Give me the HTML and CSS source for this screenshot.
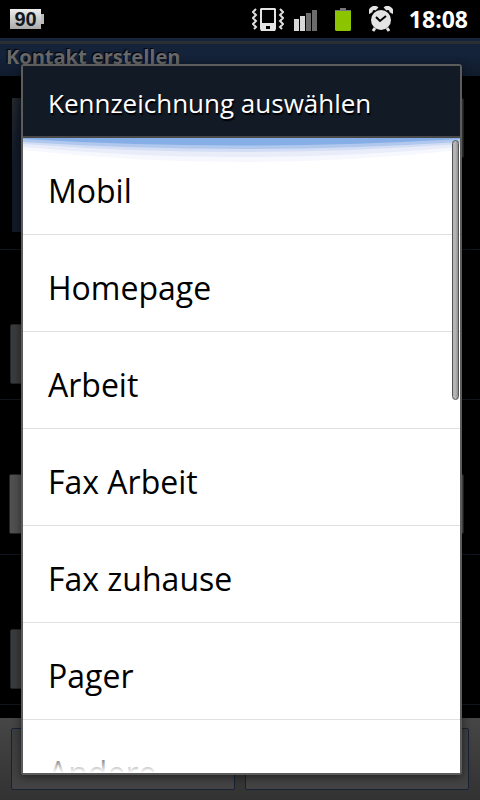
FILE: index.html
```html
<!DOCTYPE html>
<html lang="de">
<head>
    <meta charset="utf-8">
    <title>Kontakt erstellen</title>
    <meta name="viewport" content="width=device-width, initial-scale=1">
    <link rel="stylesheet" href="styles.css">
</head>
<body>

<div class="screen">
    <header class="status-bar">
        <div class="battery-level">90</div>
        <div class="status-icons">
            <svg class="icon-vibrate" width="32" height="26" viewBox="0 0 32 26">
                <path d="M4 3L1 6l3 3-3 3 3 3-3 3 3 3-2 2M28 3l3 3-3 3 3 3-3 3 3 3-3 3 2 2" fill="none" stroke="#ddd" stroke-width="2"/>
                <path d="M9 2h14l1 1v20l-1 2H9l-1-2V3zM10 4v13h12V4zM14 20v3h4v-3z" fill="#e4e4e4" fill-rule="evenodd"/>
            </svg>
            <svg class="icon-signal" width="24" height="26" viewBox="0 0 24 26">
                <path d="M0 13h5v12H0zM6 10h5v15H6z" fill="#d8d8d8"/>
                <path d="M12 7h5v18h-5zM18 4h5v21h-5z" fill="#6c6c6c"/>
            </svg>
            <svg class="icon-battery" width="18" height="26" viewBox="0 0 18 26">
                <path d="M6 2h6v2h5v3H1V4h5z" fill="#777"/>
                <path d="M1 5h16v19l-1 1H2l-1-1z" fill="#8cc400"/>
            </svg>
            <svg class="icon-alarm" width="24" height="26" viewBox="0 0 24 26">
                <path d="M2 7C0 4 5 0 8 3M22 7c2-3-3-7-6-4" fill="none" stroke="#e4e4e4" stroke-width="4"/>
                <path d="M6 22l-2 3M18 22l2 3" stroke="#e4e4e4" stroke-width="3"/>
                <circle cx="12" cy="14" r="10" fill="#e4e4e4"/>
                <path d="M7 11l4 4 6-5" fill="none" stroke="#000" stroke-width="2"/>
            </svg>
            <time class="clock">18:08</time>
        </div>
    </header>

    <main class="contact">
        <h1 class="contact-title">Kontakt erstellen</h1>
        <div class="contact-row row-photo">
            <div class="photo"></div>
            <div class="field"></div>
        </div>
        <div class="contact-row"><div class="field"></div></div>
        <div class="contact-row row-wide"><div class="field light"></div></div>
        <div class="contact-row"><div class="field"></div></div>
        <div class="contact-footer">
            <div class="footer-btn"></div>
            <div class="footer-btn"></div>
        </div>
    </main>

    <section class="dialog" role="dialog" aria-labelledby="dialog-title">
        <h2 class="dialog-title" id="dialog-title">Kennzeichnung auswählen</h2>
        <div class="dialog-body">
            <svg class="glow" viewBox="0 0 438 26" preserveAspectRatio="none">
                <path d="M0 0h438v12Q219 36 0 12z" fill="#f7f8fe"/>
                <path d="M0 0h438v9Q219 29 0 9z" fill="#e9edfa"/>
                <path d="M0 0h438v6Q219 22 0 6z" fill="#d3def5"/>
                <path d="M0 0h438v4Q219 18 0 4z" fill="#b0c8ee"/>
                <path d="M0 0h438v1Q219 14 0 1z" fill="#86aee6"/>
            </svg>
            <ul class="label-list">
                <li><button type="button">Mobil</button></li>
                <li><button type="button">Homepage</button></li>
                <li><button type="button">Arbeit</button></li>
                <li><button type="button">Fax Arbeit</button></li>
                <li><button type="button">Fax zuhause</button></li>
                <li><button type="button">Pager</button></li>
                <li><button type="button">Andere</button></li>
            </ul>
            <div class="fade"></div>
            <div class="scrollbar"></div>
        </div>
    </section>
</div>

</body>
</html>
```

FILE: styles.css
```css
* {
    box-sizing: border-box;
}
body {
    margin: 0;
    background: #000;
    font-family: "Open Sans", "Noto Sans", sans-serif;
}
.screen {
    position: relative;
    display: flex;
    flex-direction: column;
    height: 100vh;
    overflow: hidden;
}

/* status bar */
.status-bar {
    display: flex;
    justify-content: space-between;
    align-items: center;
    height: 38px;
    padding: 0 12px 0 10px;
    color: #fff;
}
.battery-level {
    position: relative;
    width: 31px;
    height: 20px;
    background: linear-gradient(#eee, #aaa);
    color: #111820;
    font: bold 20px/21px "Liberation Sans", Arial, sans-serif;
    text-align: center;
}
.battery-level::after {
    content: "";
    position: absolute;
    left: 31px;
    top: 5px;
    width: 3px;
    height: 10px;
    background: #bbb;
}
.status-icons {
    display: flex;
    align-items: center;
}
.icon-signal {
    margin-left: 10px;
}
.icon-battery {
    margin-left: 16px;
}
.icon-alarm {
    margin-left: 17px;
}
.clock {
    margin-left: 16px;
    font-size: 23px;
    line-height: 38px;
    font-weight: bold;
}

/* dimmed contact form */
.contact {
    flex: 1;
    display: flex;
    flex-direction: column;
}
.contact-title {
    height: 38px;
    margin: 0;
    padding-left: 6px;
    border-top: 3px solid #15243a;
    background: linear-gradient(#2a2f33 3px, #14233a 3px, #14233a 14px, #101b2c);
    color: #686868;
    font-size: 20px;
    line-height: 32px;
    text-shadow: -1px -1px 1px #000;
}
.contact-row {
    display: flex;
    align-items: flex-end;
    height: 150px;
    padding: 0 20px 15px 10px;
    border-bottom: 1px solid #10151f;
}
.row-photo {
    align-items: flex-start;
    height: 174px;
    padding: 22px 16px 0 12px;
}
.row-wide {
    height: 155px;
    padding: 0 16px 20px 9px;
}
.photo {
    width: 110px;
    height: 134px;
    background: linear-gradient(100deg, #26292d, #121a28 12px);
}
.field {
    flex: 1;
    height: 60px;
    border: 1px solid #20262d;
    border-radius: 2px;
    background: #3b3b3b;
}
.light {
    background: #505050;
}
.contact-footer {
    flex: 1;
    display: flex;
    gap: 10px;
    margin-top: 13px;
    padding: 10px 11px;
    background: linear-gradient(#464646, #323232);
}
.footer-btn {
    flex: 1;
    border: 1px solid #172234;
    border-radius: 2px;
    background: linear-gradient(#3c3d3f, #434343);
}

/* dialog */
.dialog {
    position: absolute;
    top: 64px;
    right: 18px;
    bottom: 25px;
    left: 21px;
    display: flex;
    flex-direction: column;
    border: 2px solid #5c5c5c;
    border-radius: 3px;
    background: #fff;
    box-shadow: 0 2px 8px rgba(0,0,0,0.5);
}
.dialog-title {
    height: 72px;
    margin: 0;
    padding-left: 25px;
    border-bottom: 2px solid #484848;
    background: #121a26;
    color: #fff;
    font-size: 26px;
    font-weight: normal;
    line-height: 74px;
    text-shadow: 1px 2px 1px #000;
}
.dialog-body {
    position: relative;
    flex: 1;
    min-height: 0;
    overflow: hidden;
}
.glow {
    position: absolute;
    top: 0;
    left: 0;
    width: 100%;
    height: 26px;
}
.label-list {
    position: relative;
    margin: 0;
    padding: 0;
    list-style: none;
}
.label-list li {
    border-bottom: 1px solid #e0e0e0;
}
.label-list button {
    display: block;
    width: 100%;
    height: 96px;
    padding: 10px 25px 0;
    border: 0;
    background: none;
    color: #000;
    font: 32px/48px "Open Sans", "Noto Sans", sans-serif;
    text-align: left;
}
.fade {
    position: absolute;
    right: 0;
    bottom: 0;
    left: 0;
    height: 20px;
    background: linear-gradient(rgba(255,255,255,0.3), #fff);
}
.scrollbar {
    position: absolute;
    top: 2px;
    right: 1px;
    width: 7px;
    height: 260px;
    border: 1px solid #555;
    border-radius: 4px;
    background: linear-gradient(90deg, #b4b4b4 50%, #8e8e8e);
}
```
